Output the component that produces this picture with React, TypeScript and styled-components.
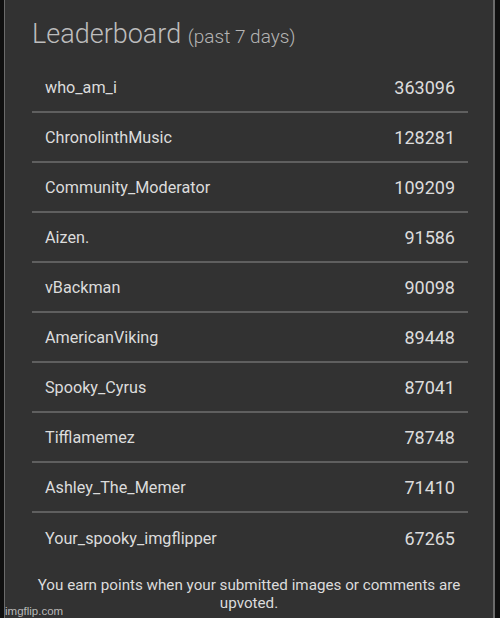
import React from "react";
import styled, { createGlobalStyle } from "styled-components";

const Global = createGlobalStyle`
  html, body { margin: 0; padding: 0; background: #0f0f0f; }
  body { font-family: Roboto, "Noto Sans", sans-serif; }
`;

const Page = styled.div`
  position: relative;
  width: 500px;
  height: 618px;
  overflow: hidden;
  background: #0f0f0f;
  padding-left: 4px;
  box-sizing: border-box;
`;

const Panel = styled.div`
  width: 488px;
  height: 618px;
  box-sizing: content-box;
  background: #323232;
  border-left: 1px solid #6a6a6a;
  border-right: 2px solid #6b6b6b;
`;

const Title = styled.h1`
  margin: 0;
  padding: 17px 0 0 27px;
  height: 63px;
  box-sizing: border-box;
  font-weight: 300;
  font-size: 27px;
  line-height: 34px;
  color: #bdbdbd;
`;

const Sub = styled.span`
  font-size: 19px;
  color: #b5b5b5;
`;

const List = styled.div`
  margin: 0 25px 0 27px;
  display: flex;
  flex-direction: column;
`;

const Row = styled.div<{ $last?: boolean }>`
  height: 50px;
  box-sizing: border-box;
  padding: 0 13px;
  display: flex;
  align-items: center;
  justify-content: space-between;
  border-bottom: ${(p) => (p.$last ? "none" : "2px solid #5f5f5f")};
  font-size: 16.2px;
  color: #dcdcdc;
`;

const Name = styled.span``;
const Score = styled.span`
  font-size: 18px;
`;

const Footer = styled.p`
  margin: 0;
  padding: 13px 20px 0;
  text-align: center;
  font-size: 15.2px;
  line-height: 18px;
  color: #dcdcdc;
`;

const Watermark = styled.div`
  position: absolute;
  left: 5px;
  bottom: 1px;
  font-family: "Liberation Sans", Arial, sans-serif;
  font-size: 11.5px;
  color: rgba(220, 220, 220, 0.8);
`;

const data: [string, number][] = [
  ["who_am_i", 363096],
  ["ChronolinthMusic", 128281],
  ["Community_Moderator", 109209],
  ["Aizen.", 91586],
  ["vBackman", 90098],
  ["AmericanViking", 89448],
  ["Spooky_Cyrus", 87041],
  ["Tifflamemez", 78748],
  ["Ashley_The_Memer", 71410],
  ["Your_spooky_imgflipper", 67265],
];

export default function App() {
  return (
    <Page>
      <Global />
      <Panel>
        <Title>
          Leaderboard <Sub>(past 7 days)</Sub>
        </Title>
        <List>
          {data.map(([n, s], i) => (
            <Row key={n} $last={i === data.length - 1}>
              <Name>{n}</Name>
              <Score>{s}</Score>
            </Row>
          ))}
        </List>
        <Footer>
          You earn points when your submitted images or comments are upvoted.
        </Footer>
      </Panel>
      <Watermark>imgflip.com</Watermark>
    </Page>
  );
}
